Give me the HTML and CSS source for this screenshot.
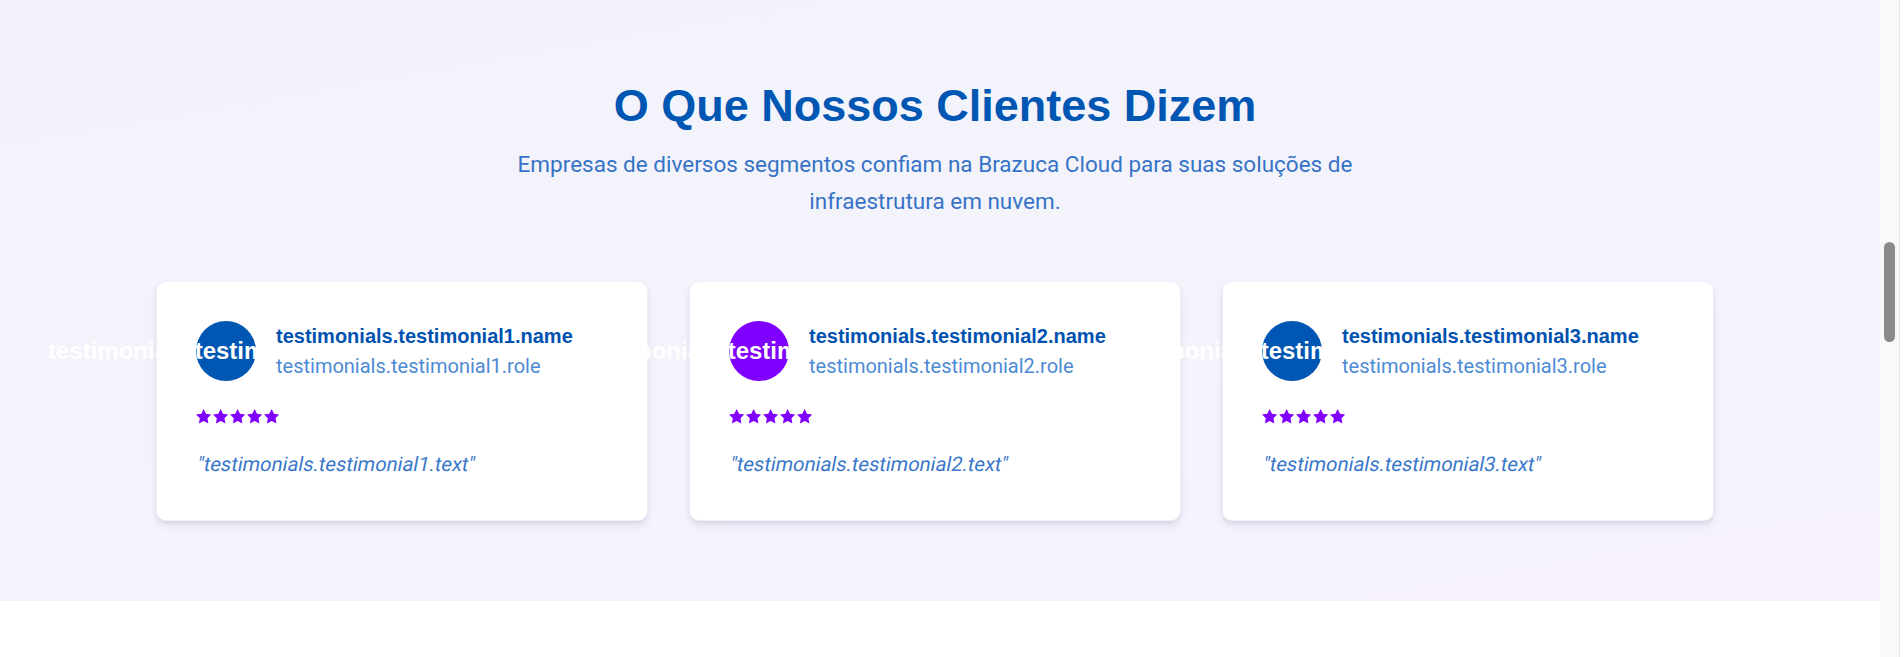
FILE: index.html
```html
<!DOCTYPE html>
<html lang="pt-BR">
<head>
<meta charset="utf-8">
<title>Depoimentos</title>
<link rel="stylesheet" href="styles.css">
</head>
<body>
<div class="page">
  <section class="testimonials">
    <div class="inner">
      <h2 class="title">O Que Nossos Clientes Dizem</h2>
      <p class="subtitle">Empresas de diversos segmentos confiam na Brazuca Cloud para suas soluções de infraestrutura em nuvem.</p>
      <div class="grid">
        <article class="card">
          <div class="head">
            <div class="avatar blue"><span class="alt">testimonials.testimonial1.name</span></div>
            <div class="who">
              <div class="name">testimonials.testimonial1.name</div>
              <div class="role">testimonials.testimonial1.role</div>
            </div>
          </div>
          <div class="stars">
            <svg viewBox="2 2 20 19.1"><polygon points="12,2 15.09,8.26 22,9.27 17,14.14 18.18,21.02 12,17.77 5.82,21.02 7,14.14 2,9.27 8.91,8.26"/></svg>
            <svg viewBox="2 2 20 19.1"><polygon points="12,2 15.09,8.26 22,9.27 17,14.14 18.18,21.02 12,17.77 5.82,21.02 7,14.14 2,9.27 8.91,8.26"/></svg>
            <svg viewBox="2 2 20 19.1"><polygon points="12,2 15.09,8.26 22,9.27 17,14.14 18.18,21.02 12,17.77 5.82,21.02 7,14.14 2,9.27 8.91,8.26"/></svg>
            <svg viewBox="2 2 20 19.1"><polygon points="12,2 15.09,8.26 22,9.27 17,14.14 18.18,21.02 12,17.77 5.82,21.02 7,14.14 2,9.27 8.91,8.26"/></svg>
            <svg viewBox="2 2 20 19.1"><polygon points="12,2 15.09,8.26 22,9.27 17,14.14 18.18,21.02 12,17.77 5.82,21.02 7,14.14 2,9.27 8.91,8.26"/></svg>
          </div>
          <p class="quote"><span class="slant">"testimonials.testimonial1.text"</span></p>
        </article>
        <article class="card">
          <div class="head">
            <div class="avatar purple"><span class="alt">testimonials.testimonial2.name</span></div>
            <div class="who">
              <div class="name">testimonials.testimonial2.name</div>
              <div class="role">testimonials.testimonial2.role</div>
            </div>
          </div>
          <div class="stars">
            <svg viewBox="2 2 20 19.1"><polygon points="12,2 15.09,8.26 22,9.27 17,14.14 18.18,21.02 12,17.77 5.82,21.02 7,14.14 2,9.27 8.91,8.26"/></svg>
            <svg viewBox="2 2 20 19.1"><polygon points="12,2 15.09,8.26 22,9.27 17,14.14 18.18,21.02 12,17.77 5.82,21.02 7,14.14 2,9.27 8.91,8.26"/></svg>
            <svg viewBox="2 2 20 19.1"><polygon points="12,2 15.09,8.26 22,9.27 17,14.14 18.18,21.02 12,17.77 5.82,21.02 7,14.14 2,9.27 8.91,8.26"/></svg>
            <svg viewBox="2 2 20 19.1"><polygon points="12,2 15.09,8.26 22,9.27 17,14.14 18.18,21.02 12,17.77 5.82,21.02 7,14.14 2,9.27 8.91,8.26"/></svg>
            <svg viewBox="2 2 20 19.1"><polygon points="12,2 15.09,8.26 22,9.27 17,14.14 18.18,21.02 12,17.77 5.82,21.02 7,14.14 2,9.27 8.91,8.26"/></svg>
          </div>
          <p class="quote"><span class="slant">"testimonials.testimonial2.text"</span></p>
        </article>
        <article class="card">
          <div class="head">
            <div class="avatar blue"><span class="alt">testimonials.testimonial3.name</span></div>
            <div class="who">
              <div class="name">testimonials.testimonial3.name</div>
              <div class="role">testimonials.testimonial3.role</div>
            </div>
          </div>
          <div class="stars">
            <svg viewBox="2 2 20 19.1"><polygon points="12,2 15.09,8.26 22,9.27 17,14.14 18.18,21.02 12,17.77 5.82,21.02 7,14.14 2,9.27 8.91,8.26"/></svg>
            <svg viewBox="2 2 20 19.1"><polygon points="12,2 15.09,8.26 22,9.27 17,14.14 18.18,21.02 12,17.77 5.82,21.02 7,14.14 2,9.27 8.91,8.26"/></svg>
            <svg viewBox="2 2 20 19.1"><polygon points="12,2 15.09,8.26 22,9.27 17,14.14 18.18,21.02 12,17.77 5.82,21.02 7,14.14 2,9.27 8.91,8.26"/></svg>
            <svg viewBox="2 2 20 19.1"><polygon points="12,2 15.09,8.26 22,9.27 17,14.14 18.18,21.02 12,17.77 5.82,21.02 7,14.14 2,9.27 8.91,8.26"/></svg>
            <svg viewBox="2 2 20 19.1"><polygon points="12,2 15.09,8.26 22,9.27 17,14.14 18.18,21.02 12,17.77 5.82,21.02 7,14.14 2,9.27 8.91,8.26"/></svg>
          </div>
          <p class="quote"><span class="slant">"testimonials.testimonial3.text"</span></p>
        </article>
      </div>
    </div>
  </section>
  <div class="rest"></div>
</div>
<div class="scrollbar"><div class="thumb"></div></div>
</body>
</html>
```
FILE: styles.css
```css
html, body {
  margin: 0;
  padding: 0;
  height: 100%;
  overflow: hidden;
}

body {
  display: flex;
  background: #ffffff;
  font-family: Roboto, "Liberation Sans", sans-serif;
}

.page {
  flex: 1;
  display: flex;
  flex-direction: column;
  min-width: 0;
}

.testimonials {
  background: linear-gradient(170deg, #f2f3fa 0%, #f4f3fc 50%, #f7f2fd 100%);
  padding: 81px 10px 80px 0;
}

.inner {
  display: flex;
  flex-direction: column;
  align-items: center;
}

.title {
  margin: 0 0 15px;
  font-family: "Liberation Sans", Arial, sans-serif;
  font-weight: 700;
  font-size: 45px;
  line-height: 50px;
  color: #0056b3;
  text-align: center;
}

.subtitle {
  margin: 0 0 62px;
  max-width: 960px;
  font-size: 22.5px;
  line-height: 36.5px;
  color: #3673c6;
  text-align: center;
}

.grid {
  width: 1558px;
  display: grid;
  grid-template-columns: repeat(3, 1fr);
  gap: 41px;
}

.card {
  background: #ffffff;
  border-radius: 10px;
  border: 1px solid #edf0f8;
  box-shadow: 0 5px 8px -1px rgba(20, 30, 80, 0.10), 0 2px 5px -2px rgba(20, 30, 80, 0.10);
  padding: 39px;
}

.head {
  display: flex;
  align-items: center;
  margin-bottom: 23px;
}

.avatar {
  width: 60px;
  height: 60px;
  border-radius: 50%;
  flex-shrink: 0;
  display: flex;
  align-items: center;
  justify-content: center;
  margin-right: 20px;
}

.avatar.blue { background: #0056b3; }
.avatar.purple { background: #8000ff; }

.alt {
  white-space: nowrap;
  font-family: "Liberation Sans", Arial, sans-serif;
  font-weight: 700;
  font-size: 24px;
  color: #ffffff;
}

.who {
  display: flex;
  flex-direction: column;
}

.name {
  font-family: "Liberation Sans", Arial, sans-serif;
  font-weight: 700;
  font-size: 20px;
  line-height: 30px;
  color: #0052b0;
}

.role {
  font-size: 20px;
  line-height: 30px;
  color: #4d8ad4;
}

.stars {
  display: flex;
  align-items: center;
  gap: 1.6px;
  height: 25px;
  margin-bottom: 19px;
}

.stars svg {
  width: 15.3px;
  height: 14.6px;
  fill: #8000ff;
}

.quote {
  margin: 0;
  font-size: 20px;
  line-height: 32.5px;
  color: #3a78c9;
}

.slant {
  display: inline-block;
  transform: skewX(-11deg);
  transform-origin: 0 75%;
}

.rest {
  flex: 1;
  background: #ffffff;
}

.scrollbar {
  width: 19px;
  border-right: 1px solid #e6e6e6;
  margin-right: 3px;
  background: #f9f9f9;
  display: flex;
  flex-direction: column;
  align-items: center;
}

.thumb {
  margin-top: 242px;
  width: 11px;
  height: 100px;
  border-radius: 6px;
  background: #8a8a8a;
}
```
